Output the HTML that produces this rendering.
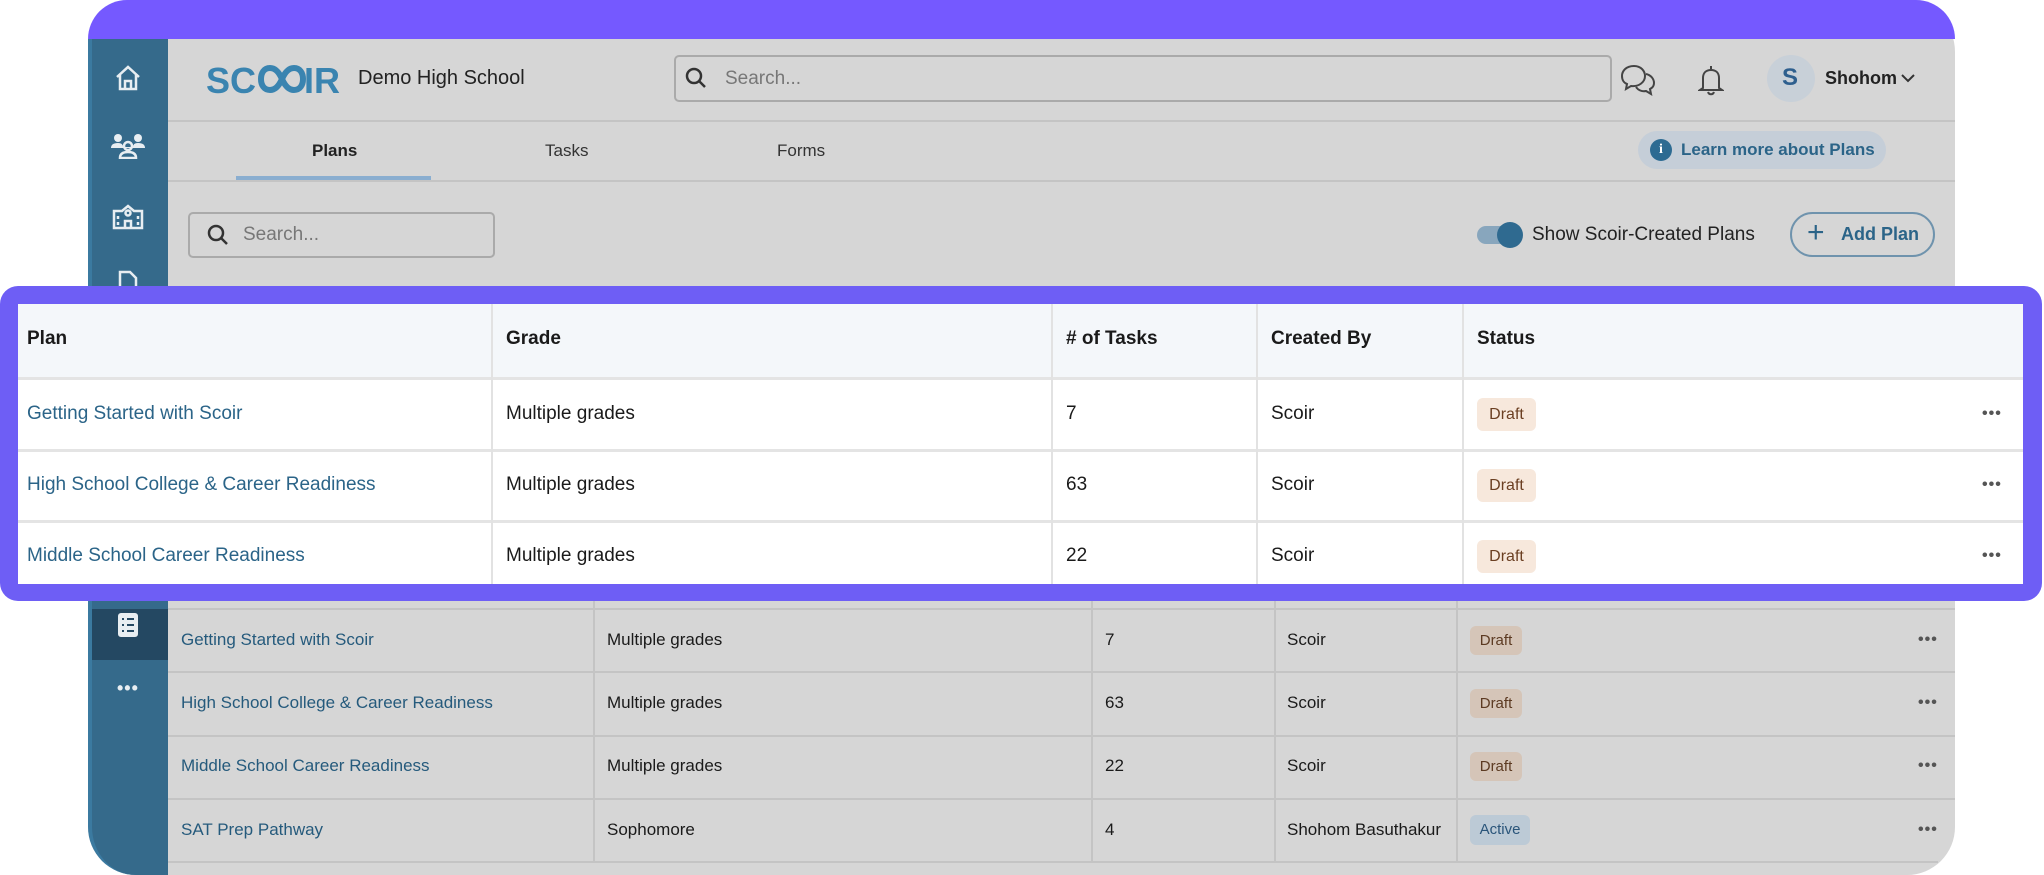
<!DOCTYPE html>
<html><head><meta charset="utf-8"><style>
*{margin:0;padding:0;box-sizing:border-box}
body{width:2044px;height:875px;background:#fff;position:relative;overflow:hidden;font-family:"Liberation Sans",Arial,sans-serif;color:#1a1a1a}
.abs{position:absolute}
.frame{left:88px;top:0;width:1867px;height:875px;background:#d6d6d6;border-radius:52px 52px 48px 48px;overflow:hidden}
.band{left:88px;top:0;width:1867px;height:39px;background:#7559ff;border-radius:52px 52px 0 0}
.side{left:88px;top:39px;width:80px;height:836px;background:#356a8b;border-left:4px solid #3b7aa0;border-bottom-left-radius:48px}
.t{position:absolute;white-space:nowrap}
.hl{position:absolute;height:2px;background:#c4c4c4}
.vl{position:absolute;width:2px;background:#c4c4c4}
.link{color:#2b6488}
.blink{color:#255a7c}
.badge{position:absolute;border-radius:6px;font-size:15px;text-align:center}
.dots{position:absolute;font-size:16px;letter-spacing:1px;color:#555;font-weight:bold}
</style></head><body>
<div class="abs frame"></div>
<div class="abs band"></div>
<div class="abs side"></div>

<!-- sidebar icons -->
<svg class="abs" style="left:114px;top:64px" width="28" height="28" viewBox="0 0 28 28" fill="none" stroke="#e8eef2" stroke-width="2.5"><path d="M3 13 L14 3 L25 13 M6 11 V25 H22 V11 M11 25 V17 H17 V25"/></svg>
<svg class="abs" style="left:111px;top:133px" width="34" height="26" viewBox="0 0 34 26" fill="#e8eef2"><circle cx="7" cy="5" r="4"/><circle cx="27" cy="5" r="4"/><path d="M0 15 Q0 10 7 10 Q12 10 12 14 H22 Q22 10 27 10 Q34 10 34 15 Z"/><circle cx="17" cy="13" r="4" fill="none" stroke="#e8eef2" stroke-width="2.5"/><path d="M9 25 Q9 19 17 19 Q25 19 25 25 Z" fill="none" stroke="#e8eef2" stroke-width="2.5"/></svg>
<svg class="abs" style="left:112px;top:202px" width="32" height="28" viewBox="0 0 32 28" fill="none" stroke="#e8eef2" stroke-width="2.5"><path d="M2 9 H10 L16 4 L22 9 H30 V26 H2 Z M13 26 V19 H19 V26"/><circle cx="16" cy="11" r="2.5"/><path d="M6 14 V17 M6 20 V23 M26 14 V17 M26 20 V23"/></svg>
<svg class="abs" style="left:118px;top:270px" width="20" height="18" viewBox="0 0 20 18" fill="none" stroke="#e8eef2" stroke-width="2.5"><path d="M2 18 V2 H12 L18 8 V18"/></svg>
<div class="abs" style="left:92px;top:609px;width:76px;height:51px;background:#244862"></div>
<svg class="abs" style="left:117px;top:612px" width="22" height="26" viewBox="0 0 22 26"><rect x="1" y="1" width="20" height="24" rx="3" fill="#e8eef2"/><g stroke="#244862" stroke-width="2"><path d="M5 7h2M10 7h7M5 13h2M10 13h7M5 19h2M10 19h7"/></g></svg>
<div class="t" style="left:117px;top:678px;color:#e8eef2;font-size:18px;font-weight:bold;letter-spacing:1px">•••</div>

<!-- header -->
<div class="t" style="left:206px;top:60px;font-size:36px;font-weight:bold;color:#3a84b0">SC</div>
<svg class="abs" style="left:258px;top:64px" width="48" height="30" viewBox="0 0 48 30" fill="none" stroke="#3a84b0" stroke-width="6"><path d="M24 15 C20 6 16 4 12 4 C6 4 3 9 3 15 C3 21 6 26 12 26 C16 26 20 24 24 15 C28 6 32 4 36 4 C42 4 45 9 45 15 C45 21 42 26 36 26 C32 26 28 24 24 15"/></svg>
<div class="t" style="left:304px;top:60px;font-size:36px;font-weight:bold;color:#3a84b0">IR</div>
<div class="t" style="left:358px;top:67px;font-size:20px;color:#222">Demo High School</div>
<div class="abs" style="left:674px;top:55px;width:938px;height:47px;border:2px solid #aaa;border-radius:5px"></div>
<svg class="abs" style="left:684px;top:66px" width="24" height="24" viewBox="0 0 24 24" fill="none" stroke="#333" stroke-width="2.5"><circle cx="10" cy="10" r="7"/><path d="M15 15 L21 21"/></svg>
<div class="t" style="left:725px;top:68px;font-size:19px;color:#777">Search...</div>
<svg class="abs" style="left:1620px;top:64px" width="36" height="32" viewBox="0 0 36 32" fill="none" stroke="#444" stroke-width="2"><path d="M14 2 C6 2 2 7 2 12 C2 16 4 19 7 20 L6 25 L11 22 C19 23 25 18 25 12 C25 7 21 2 14 2 Z"/><path d="M26 10 C31 11 34 15 34 19 C34 22 32 24 30 25 L31 30 L26 27 C22 28 18 26 16 23"/></svg>
<svg class="abs" style="left:1698px;top:64px" width="26" height="32" viewBox="0 0 26 32" fill="none" stroke="#444" stroke-width="2"><path d="M13 2 V5 M5 24 V14 C5 9 8 6 13 6 C18 6 21 9 21 14 V24 L24 26 H2 L5 24 Z M10 28 C11 31 15 31 16 28"/></svg>
<div class="abs" style="left:1767px;top:55px;width:48px;height:47px;border-radius:50%;background:#c8d0d8"></div>
<div class="t" style="left:1782px;top:64px;font-size:24px;color:#2e5f8e;font-weight:bold">S</div>
<div class="t" style="left:1825px;top:68px;font-size:18px;font-weight:bold;color:#222">Shohom</div>
<svg class="abs" style="left:1900px;top:72px" width="16" height="12" viewBox="0 0 16 12" fill="none" stroke="#333" stroke-width="2"><path d="M2 3 L8 9 L14 3"/></svg>
<div class="hl" style="left:168px;top:120px;width:1787px"></div>

<!-- tabs -->
<div class="t" style="left:312px;top:141px;font-size:17px;font-weight:bold;color:#222">Plans</div>
<div class="t" style="left:545px;top:141px;font-size:17px;color:#333">Tasks</div>
<div class="t" style="left:777px;top:141px;font-size:17px;color:#333">Forms</div>
<div class="abs" style="left:236px;top:176px;width:195px;height:4px;background:#8aaed0"></div>
<div class="hl" style="left:168px;top:180px;width:1787px"></div>
<div class="abs" style="left:1638px;top:131px;width:248px;height:38px;border-radius:19px;background:#c5ced8"></div>
<div class="abs" style="left:1650px;top:139px;width:22px;height:22px;border-radius:50%;background:#2d6b92;color:#fff;font-size:14px;font-weight:bold;text-align:center;line-height:22px;font-family:'Liberation Serif',serif">i</div>
<div class="t" style="left:1681px;top:140px;font-size:17px;font-weight:bold;color:#2b6488">Learn more about Plans</div>

<!-- search & toolbar -->
<div class="abs" style="left:188px;top:212px;width:307px;height:46px;border:2px solid #aaa;border-radius:5px"></div>
<svg class="abs" style="left:206px;top:223px" width="24" height="24" viewBox="0 0 24 24" fill="none" stroke="#333" stroke-width="2.5"><circle cx="10" cy="10" r="7"/><path d="M15 15 L21 21"/></svg>
<div class="t" style="left:243px;top:224px;font-size:19px;color:#777">Search...</div>
<div class="abs" style="left:1477px;top:226px;width:40px;height:18px;border-radius:9px;background:#88a6bd"></div>
<div class="abs" style="left:1497px;top:222px;width:26px;height:26px;border-radius:50%;background:#2f6a90"></div>
<div class="t" style="left:1532px;top:224px;font-size:19px;color:#222">Show Scoir-Created Plans</div>
<div class="abs" style="left:1790px;top:212px;width:145px;height:45px;border:2px solid #6f93ad;border-radius:23px"></div>
<div class="t" style="left:1807px;top:216px;font-size:30px;color:#2b6488;font-weight:300">+</div>
<div class="t" style="left:1841px;top:224px;font-size:18px;font-weight:bold;color:#2b6488">Add Plan</div>

<!-- background table -->
<div class="hl" style="left:168px;top:608px;width:1787px"></div>
<div class="hl" style="left:168px;top:671px;width:1787px"></div>
<div class="hl" style="left:168px;top:735px;width:1787px"></div>
<div class="hl" style="left:168px;top:798px;width:1787px"></div>
<div class="hl" style="left:168px;top:861px;width:1770px"></div>
<div class="vl" style="left:593px;top:600px;height:262px"></div>
<div class="vl" style="left:1091px;top:600px;height:262px"></div>
<div class="vl" style="left:1274px;top:600px;height:262px"></div>
<div class="vl" style="left:1456px;top:600px;height:262px"></div>
<div style="position:absolute;left:0;top:0;font-size:17px">
<div class="t blink" style="left:181px;top:630px">Getting Started with Scoir</div>
<div class="t blink" style="left:181px;top:693px">High School College &amp; Career Readiness</div>
<div class="t blink" style="left:181px;top:756px">Middle School Career Readiness</div>
<div class="t blink" style="left:181px;top:820px">SAT Prep Pathway</div>
<div class="t" style="left:607px;top:630px">Multiple grades</div>
<div class="t" style="left:607px;top:693px">Multiple grades</div>
<div class="t" style="left:607px;top:756px">Multiple grades</div>
<div class="t" style="left:607px;top:820px">Sophomore</div>
<div class="t" style="left:1105px;top:630px">7</div>
<div class="t" style="left:1105px;top:693px">63</div>
<div class="t" style="left:1105px;top:756px">22</div>
<div class="t" style="left:1105px;top:820px">4</div>
<div class="t" style="left:1287px;top:630px">Scoir</div>
<div class="t" style="left:1287px;top:693px">Scoir</div>
<div class="t" style="left:1287px;top:756px">Scoir</div>
<div class="t" style="left:1287px;top:820px">Shohom Basuthakur</div>
</div>
<div class="badge" style="left:1470px;top:626px;width:52px;height:29px;line-height:29px;background:#d5c5b8;color:#5c3a22">Draft</div>
<div class="badge" style="left:1470px;top:689px;width:52px;height:29px;line-height:29px;background:#d5c5b8;color:#5c3a22">Draft</div>
<div class="badge" style="left:1470px;top:752px;width:52px;height:29px;line-height:29px;background:#d5c5b8;color:#5c3a22">Draft</div>
<div class="badge" style="left:1470px;top:815px;width:60px;height:30px;line-height:30px;background:#bccad6;color:#2a557a">Active</div>
<div class="dots" style="left:1918px;top:631px">•••</div>
<div class="dots" style="left:1918px;top:694px">•••</div>
<div class="dots" style="left:1918px;top:757px">•••</div>
<div class="dots" style="left:1918px;top:821px">•••</div>

<!-- highlighted card -->
<div class="abs" style="left:0;top:286px;width:2042px;height:315px;background:#6e5ef5;border-radius:18px"></div>
<div class="abs" style="left:18px;top:304px;width:2005px;height:280px;background:#fff"></div>
<div class="abs" style="left:18px;top:304px;width:2005px;height:74px;background:#f4f7fa"></div>
<div class="hl" style="left:18px;top:377px;width:2005px;background:#e4e4e4;height:3px"></div>
<div class="hl" style="left:18px;top:449px;width:2005px;background:#e4e4e4;height:3px"></div>
<div class="hl" style="left:18px;top:520px;width:2005px;background:#e4e4e4;height:3px"></div>
<div class="vl" style="left:491px;top:304px;height:280px;background:#e2e2e2"></div>
<div class="vl" style="left:1051px;top:304px;height:280px;background:#e2e2e2"></div>
<div class="vl" style="left:1256px;top:304px;height:280px;background:#e2e2e2"></div>
<div class="vl" style="left:1462px;top:304px;height:280px;background:#e2e2e2"></div>
<div style="position:absolute;left:0;top:0;font-size:19px">
<div class="t" style="left:27px;top:328px;font-weight:bold">Plan</div>
<div class="t" style="left:506px;top:328px;font-weight:bold">Grade</div>
<div class="t" style="left:1066px;top:328px;font-weight:bold"># of Tasks</div>
<div class="t" style="left:1271px;top:328px;font-weight:bold">Created By</div>
<div class="t" style="left:1477px;top:328px;font-weight:bold">Status</div>
<div class="t link" style="left:27px;top:403px">Getting Started with Scoir</div>
<div class="t link" style="left:27px;top:474px">High School College &amp; Career Readiness</div>
<div class="t link" style="left:27px;top:545px">Middle School Career Readiness</div>
<div class="t" style="left:506px;top:403px">Multiple grades</div>
<div class="t" style="left:506px;top:474px">Multiple grades</div>
<div class="t" style="left:506px;top:545px">Multiple grades</div>
<div class="t" style="left:1066px;top:403px">7</div>
<div class="t" style="left:1066px;top:474px">63</div>
<div class="t" style="left:1066px;top:545px">22</div>
<div class="t" style="left:1271px;top:403px">Scoir</div>
<div class="t" style="left:1271px;top:474px">Scoir</div>
<div class="t" style="left:1271px;top:545px">Scoir</div>
</div>
<div class="badge" style="left:1477px;top:398px;width:59px;height:33px;line-height:33px;background:#f7e8dc;color:#6b3f22;font-size:16px">Draft</div>
<div class="badge" style="left:1477px;top:469px;width:59px;height:33px;line-height:33px;background:#f7e8dc;color:#6b3f22;font-size:16px">Draft</div>
<div class="badge" style="left:1477px;top:540px;width:59px;height:33px;line-height:33px;background:#f7e8dc;color:#6b3f22;font-size:16px">Draft</div>
<div class="dots" style="left:1982px;top:405px">•••</div>
<div class="dots" style="left:1982px;top:476px">•••</div>
<div class="dots" style="left:1982px;top:547px">•••</div>
</body></html>
